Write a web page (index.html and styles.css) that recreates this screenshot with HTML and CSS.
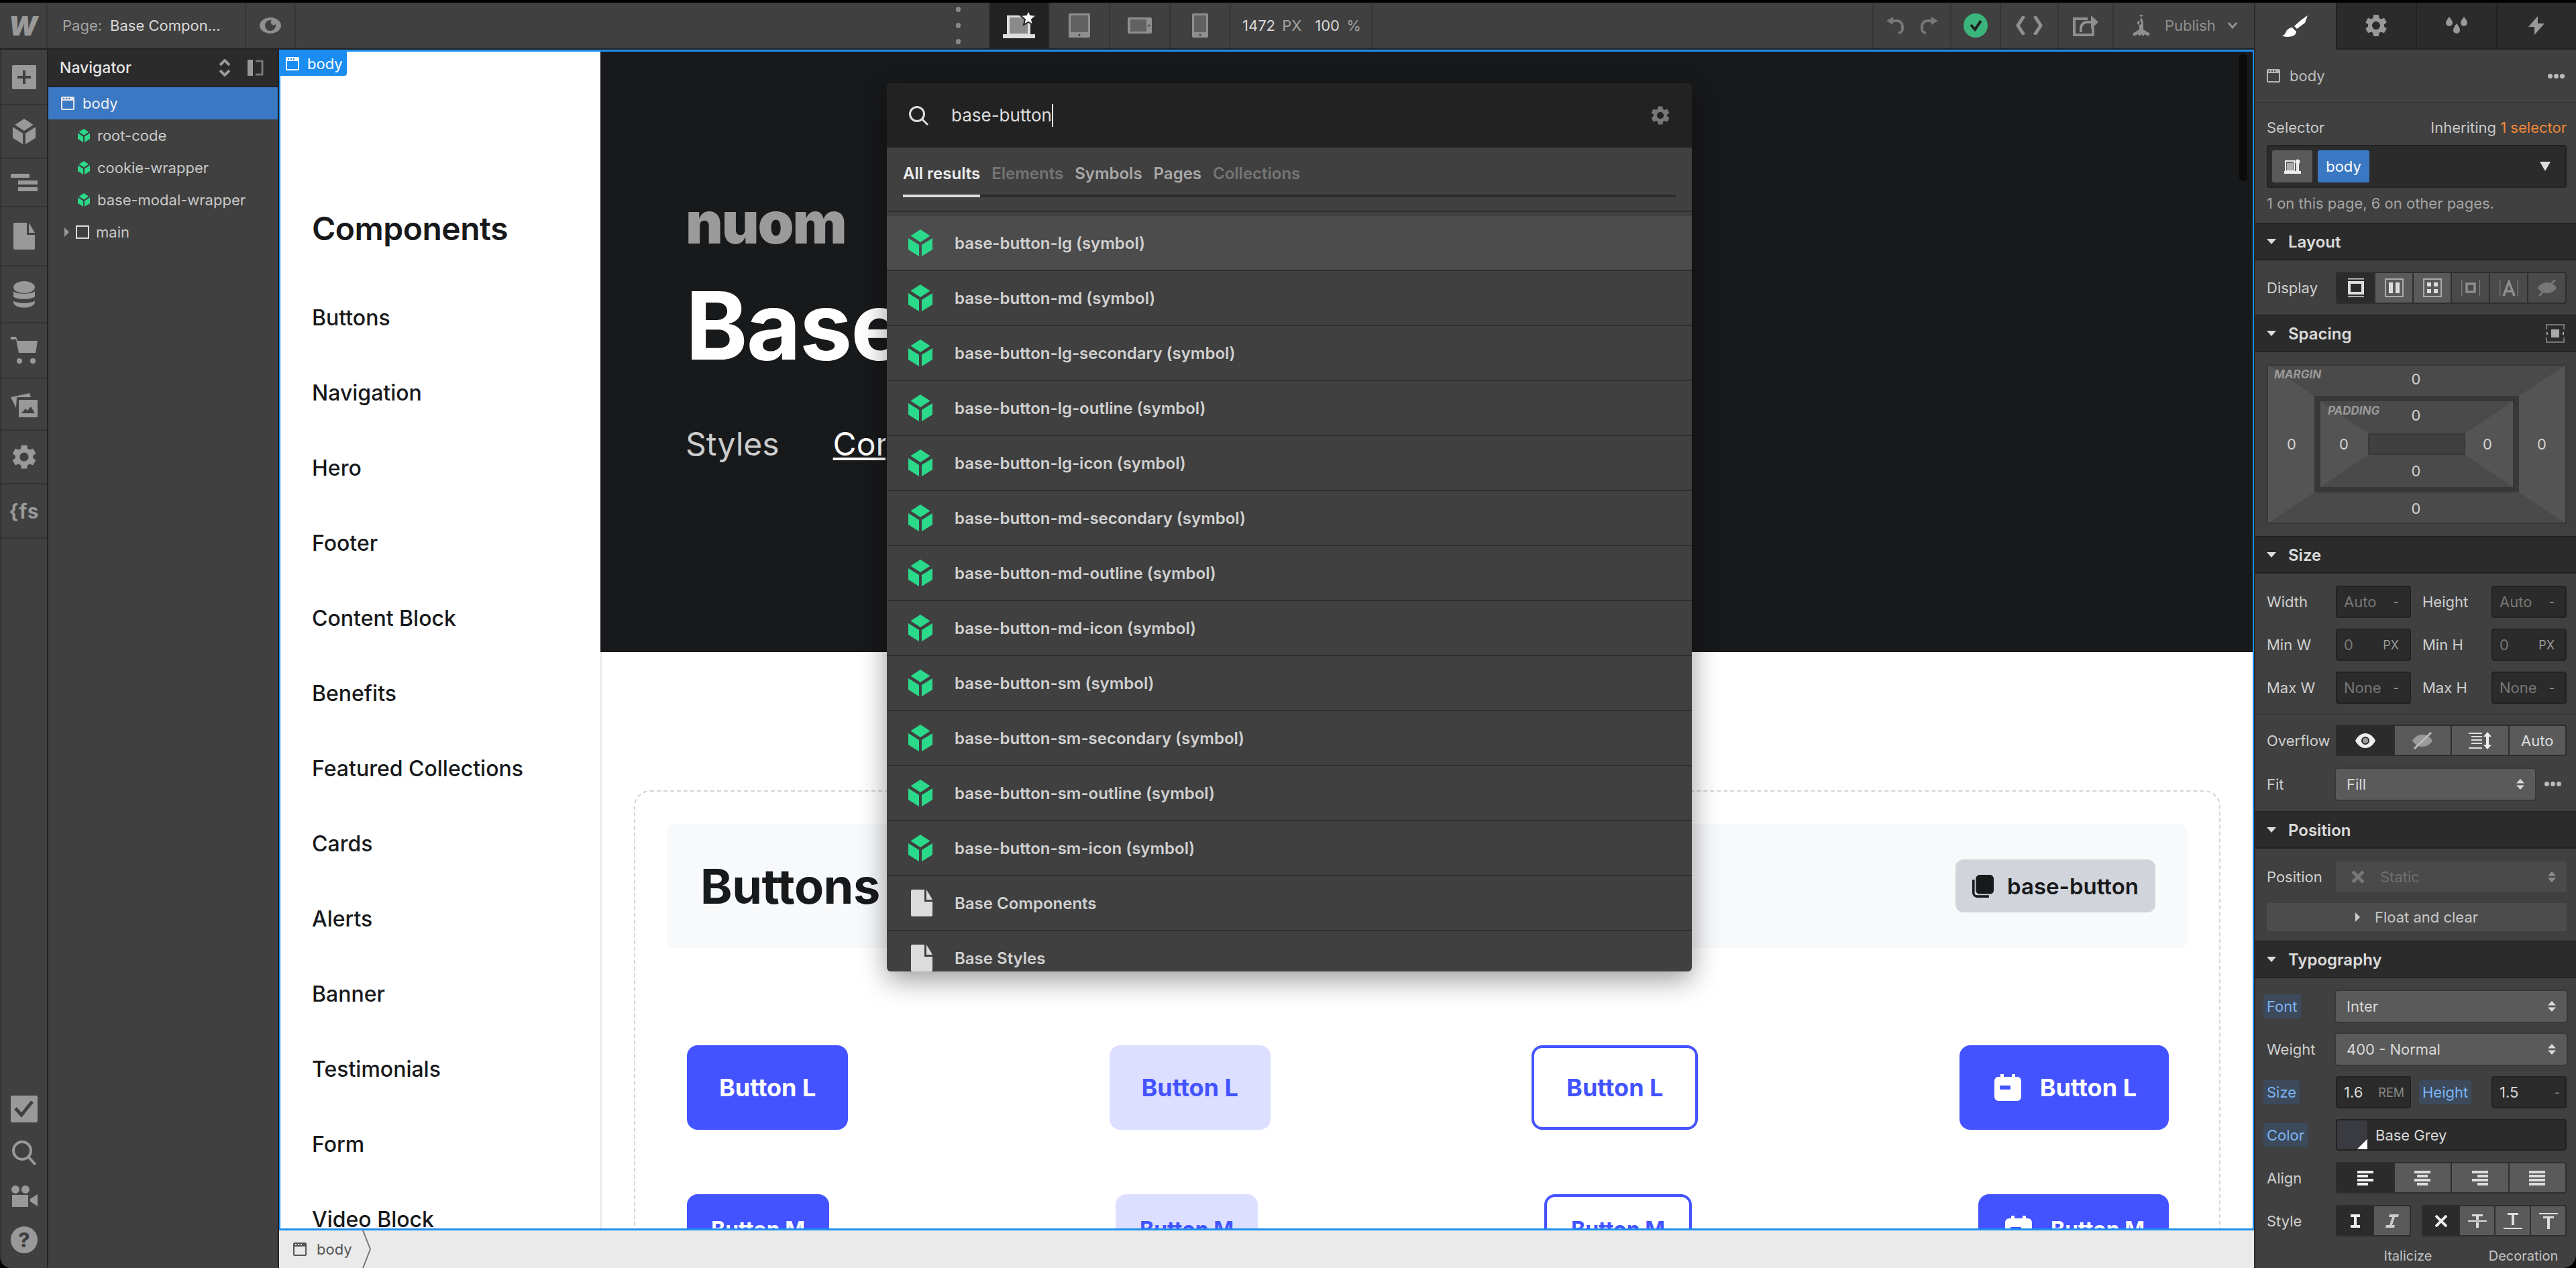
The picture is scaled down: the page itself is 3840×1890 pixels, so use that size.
FILE: index.html
```html
<!DOCTYPE html>
<html lang="en">
<head>
  <meta charset="UTF-8" />
  <title>Base Components - Designer</title>
  <link rel="stylesheet" href="styles.css">
</head>
<body>
  <svg class="defs" xmlns="http://www.w3.org/2000/svg">
    <symbol id="cube" viewBox="0 0 36 40">
      <path d="M18 0l14.500 9.500L18 19 3.500 9.500z"/>
      <path d="M0 13l16 10v17L0 30zM36 13L20 23v17l16-10z"/>
    </symbol>
    <symbol id="page" viewBox="0 0 32 40">
      <path d="M2 0h18v18h12v20a2 2 0 0 1-2 2H2a2 2 0 0 1-2-2V2a2 2 0 0 1 2-2z"/>
      <path d="M23 0l9 15h-9z"/>
    </symbol>
    <symbol id="gear" viewBox="0 0 24 24">
      <path fill-rule="evenodd" d="M19.140 12.940c.04-.3.06-.61.06-.94 0-.32-.02-.64-.07-.94l2.030-1.580c.18-.14.23-.41.12-.61l-1.920-3.320c-.12-.22-.37-.29-.59-.22l-2.390.96c-.5-.38-1.030-.7-1.620-.94l-.36-2.540c-.04-.24-.24-.41-.48-.41h-3.840c-.24 0-.43.17-.47.41l-.36 2.540c-.59.24-1.130.57-1.620.94l-2.390-.96c-.22-.08-.47 0-.59.22L2.740 8.870c-.12.21-.08.47.12.61l2.030 1.580c-.05.3-.09.63-.09.94s.02.64.07.94l-2.030 1.580c-.18.14-.23.41-.12.61l1.920 3.320c.12.22.37.29.59.22l2.390-.96c.5.38 1.030.7 1.620.94l.36 2.540c.05.24.24.41.48.41h3.840c.24 0 .44-.17.47-.41l.36-2.540c.59-.24 1.130-.56 1.620-.94l2.390.96c.22.08.47 0 .59-.22l1.920-3.320c.12-.22.07-.47-.12-.61l-2.010-1.580zM12 15.600c-1.980 0-3.600-1.620-3.600-3.600s1.620-3.600 3.600-3.600 3.600 1.620 3.600 3.600-1.620 3.600-3.600 3.600z"/>
    </symbol>
    <symbol id="bodybox" viewBox="0 0 20 20">
      <path fill-rule="evenodd" d="M2 0h16a2 2 0 0 1 2 2v16a2 2 0 0 1-2 2H2a2 2 0 0 1-2-2V2a2 2 0 0 1 2-2zm0 6v12h16V6zM3 2v2h2V2zm4 0v2h2V2zm4 0v2h2V2z"/>
    </symbol>
    <symbol id="updown" viewBox="0 0 12 16">
      <path d="M6 0l6 6.500H0zM6 16l6-6.500H0z"/>
    </symbol>
    <symbol id="calendar" viewBox="0 0 40 40">
      <path fill-rule="evenodd" d="M9 0h5v4h12V0h5v4h3a6 6 0 0 1 6 6v24a6 6 0 0 1-6 6H6a6 6 0 0 1-6-6V10a6 6 0 0 1 6-6h3zM8 17v6h16v-6z"/>
    </symbol>
  </svg>

  <div class="app">
    <div class="left">
      <header class="topbar">
        <div class="tb-logo">W</div>
        <div class="tb-page"><span class="muted">Page:</span> Base Compon...</div>
        <div class="tb-eye">
          <svg width="32" height="24" viewBox="0 0 32 24"><path fill="#8f8f8f" fill-rule="evenodd" d="M16 0c8 0 16 5 16 12s-8 12-16 12S0 19 0 12 8 0 16 0zm0 4a8 8 0 1 0 8 8c0-.7 0-1.400-.3-2a4 4 0 0 1-5.700-5.700 8 8 0 0 0-2-.3z"/></svg>
        </div>
        <div class="tb-dots"><i></i><i></i><i></i></div>
        <div class="tb-device active">
          <svg class="device-laptop" width="52" height="42" viewBox="0 0 52 42">
            <path fill="#ddd" d="M6 8h35v30H6zM0 36h48v6H0z"/>
            <path fill="#8a8a8a" d="M10 11h27v24H10z"/>
            <path fill="#fff" stroke="#222" stroke-width="2" d="M38 0l3 7 9 1-7 6 2 8-7-4-7 4 2-8-7-6 9-1z"/>
          </svg>
        </div>
        <div class="tb-device">
          <svg width="32" height="36" viewBox="0 0 32 36"><path fill="#8f8f8f" d="M2 0h28a2 2 0 0 1 2 2v32a2 2 0 0 1-2 2H2a2 2 0 0 1-2-2V2a2 2 0 0 1 2-2z"/><path fill="#616161" d="M3 3h26v25H3z"/><circle cx="16" cy="32" r="1.500" fill="#404040"/></svg>
        </div>
        <div class="tb-device">
          <svg width="36" height="24" viewBox="0 0 36 24"><path fill="#8f8f8f" d="M2 0h32a2 2 0 0 1 2 2v20a2 2 0 0 1-2 2H2a2 2 0 0 1-2-2V2a2 2 0 0 1 2-2z"/><path fill="#616161" d="M4 3h24v18H4z"/><circle cx="32" cy="12" r="1.500" fill="#404040"/></svg>
        </div>
        <div class="tb-device">
          <svg width="24" height="36" viewBox="0 0 24 36"><path fill="#8f8f8f" d="M2 0h20a2 2 0 0 1 2 2v32a2 2 0 0 1-2 2H2a2 2 0 0 1-2-2V2a2 2 0 0 1 2-2z"/><path fill="#616161" d="M3 3h18v25H3z"/><circle cx="12" cy="32" r="1.500" fill="#404040"/></svg>
        </div>
        <div class="tb-size"><span>1472 <span class="muted">PX</span></span><span>100 <span class="muted">%</span></span></div>
        <div class="tb-spacer"></div>
        <div class="tb-undo">
          <svg width="28" height="26" viewBox="0 0 28 26"><path fill="none" stroke="#777" stroke-width="4" d="M8 6h8a8 8 0 0 1 8 8v4a6 6 0 0 1-6 6"/><path fill="#777" d="M0 6l10-6v12z"/></svg>
          <svg width="28" height="26" viewBox="0 0 28 26"><path fill="none" stroke="#777" stroke-width="4" d="M20 6h-8a8 8 0 0 0-8 8v4a6 6 0 0 0 6 6"/><path fill="#777" d="M28 6L18 0v12z"/></svg>
        </div>
        <div class="tb-check">
          <svg width="36" height="36" viewBox="0 0 36 36"><circle cx="18" cy="18" r="18" fill="#3ab57c"/><path fill="none" stroke="#222" stroke-width="4" d="M11 17l6 7 9-13"/></svg>
        </div>
        <div class="tb-code">
          <svg width="40" height="28" viewBox="0 0 40 28"><path fill="none" stroke="#8f8f8f" stroke-width="5" d="M12 0L3 14l9 14M28 0l9 14-9 14"/></svg>
        </div>
        <div class="tb-export">
          <svg width="38" height="32" viewBox="0 0 38 32"><path fill="none" stroke="#8f8f8f" stroke-width="4" d="M22 6H2v24h28V18"/><path fill="none" stroke="#8f8f8f" stroke-width="4" d="M12 26v-6a9 9 0 0 1 9-9h6"/><path fill="#8f8f8f" d="M27 1l11 10-11 10z"/></svg>
        </div>
        <div class="tb-publish">
          <svg width="32" height="32" viewBox="0 0 32 32"><path fill="#8f8f8f" fill-rule="evenodd" d="M16 0c4 4 6 9 6 14v8l10 6-2 4-6-3-2 3-3-3-3 3-2-3-6 3-2-4 10-6v-8c0-5 2-10 6-14zm0 9a3 3 0 1 0 0 6 3 3 0 0 0 0-6z"/></svg>
          <span>Publish</span>
          <svg width="14" height="10" viewBox="0 0 14 10"><path fill="none" stroke="#8f8f8f" stroke-width="3" d="M1 1l6 7 6-7"/></svg>
        </div>
      </header>

      <div class="work">
        <nav class="rail">
          <div class="rail-top">
            <div class="rail-cell h83"><svg width="36" height="36" viewBox="0 0 36 36"><rect width="36" height="36" rx="2" fill="#999"/><path fill="#404040" d="M16 8h4v8h8v4h-8v8h-4v-8H8v-4h8z"/></svg></div>
            <div class="rail-cell h80"><svg class="gray" width="36" height="38"><use href="#cube"/></svg></div>
            <div class="rail-cell h72"><svg width="40" height="26" viewBox="0 0 40 26"><path fill="#999" d="M0 0h28v6H0zM11 10h29v6H11zM11 20h29v6H11z"/></svg></div>
            <div class="rail-cell h88"><svg class="gray" width="32" height="40"><use href="#page"/></svg></div>
            <div class="rail-cell h85"><svg width="32" height="40" viewBox="0 0 32 40"><ellipse cx="16" cy="9" rx="16" ry="9" fill="#999"/><path fill="#999" d="M0 15c4 5 28 5 32 0v8c-4 5-28 5-32 0zM0 29c4 5 28 5 32 0v3c-2 10-30 10-32 0z"/></svg></div>
            <div class="rail-cell h83"><svg width="40" height="42" viewBox="0 0 40 42"><path fill="#999" d="M0 0h8l2 6h30l-3 18H12L8 4H0z"/><circle cx="13" cy="36" r="4" fill="#999"/><circle cx="33" cy="36" r="4" fill="#999"/></svg></div>
            <div class="rail-cell h77"><svg width="40" height="38" viewBox="0 0 40 38"><path fill="#999" d="M0 8l28-6 2 6H9l-1 16z"/><path fill="#999" fill-rule="evenodd" d="M12 12h28v26H12zm4 20h20l-6-10-5 6-3-3z"/></svg></div>
            <div class="rail-cell h80"><svg class="gray" width="44" height="44"><use href="#gear"/></svg></div>
            <div class="rail-cell h81 rail-fs">{fs</div>
          </div>
          <div class="rail-bottom">
            <div class="rail-cell h65"><svg width="40" height="40" viewBox="0 0 40 40"><rect width="40" height="40" rx="2" fill="#999"/><path fill="none" stroke="#404040" stroke-width="5" d="M7 19l9 10L32 9"/></svg></div>
            <div class="rail-cell h65"><svg width="36" height="36" viewBox="0 0 36 36"><circle cx="15" cy="15" r="13" fill="none" stroke="#999" stroke-width="4"/><path stroke="#999" stroke-width="4" d="M24 24l11 12"/></svg></div>
            <div class="rail-cell h65"><svg width="40" height="32" viewBox="0 0 40 32"><circle cx="7" cy="6" r="6" fill="#999"/><circle cx="22" cy="6" r="6" fill="#999"/><path fill="#999" d="M2 14h24v18H2zM29 20l11-7v18l-11-7z"/></svg></div>
            <div class="rail-cell h65"><span class="rail-help">?</span></div>
          </div>
        </nav>

        <aside class="navigator">
          <div class="nav-head">
            <span>Navigator</span>
            <svg class="nav-sort" width="18" height="26" viewBox="0 0 18 26"><path fill="none" stroke="#999" stroke-width="4" d="M2 9l7-7 7 7M2 17l7 7 7-7"/></svg>
            <svg width="24" height="24" viewBox="0 0 24 24"><path fill="#999" d="M0 0h8v24H0z"/><path fill="none" stroke="#777" stroke-width="3" d="M12 2h10v20H12"/></svg>
          </div>
          <div class="nav-row selected"><svg class="box-icon" width="20" height="20"><use href="#bodybox"/></svg>body</div>
          <div class="nav-row"><svg class="green" width="20" height="20"><use href="#cube"/></svg>root-code</div>
          <div class="nav-row"><svg class="green" width="20" height="20"><use href="#cube"/></svg>cookie-wrapper</div>
          <div class="nav-row"><svg class="green" width="20" height="20"><use href="#cube"/></svg>base-modal-wrapper</div>
          <div class="nav-row nav-main">
            <span class="nav-arrow"></span>
            <span class="nav-square"></span>main
          </div>
        </aside>

        <div class="stage">
          <main class="canvas">
            <div class="page">
              <section class="side">
                <h2>Components</h2>
                <ul>
                  <li>Buttons</li>
                  <li>Navigation</li>
                  <li>Hero</li>
                  <li>Footer</li>
                  <li>Content Block</li>
                  <li>Benefits</li>
                  <li>Featured Collections</li>
                  <li>Cards</li>
                  <li>Alerts</li>
                  <li>Banner</li>
                  <li>Testimonials</li>
                  <li>Form</li>
                  <li>Video Block</li>
                </ul>
              </section>
              <section class="content">
                <div class="hero">
                  <div class="logo">nuom</div>
                  <h1>Base</h1>
                  <div class="hero-links"><span>Styles</span><span class="current">Components</span></div>
                </div>
                <div class="dash">
                  <div class="band">
                    <h3>Buttons</h3>
                    <div class="pill">
                      <svg width="32" height="36" viewBox="0 0 36 38"><path fill="#18191b" d="M12 0h18a6 6 0 0 1 6 6v20a6 6 0 0 1-6 6H12a6 6 0 0 1-6-6V6a6 6 0 0 1 6-6z"/><path fill="none" stroke="#18191b" stroke-width="4" d="M2 8v22a6 6 0 0 0 6 6h20"/></svg>
                      base-button
                    </div>
                  </div>
                  <div class="btn-row lg">
                    <span class="btn">Button L</span>
                    <span class="btn soft">Button L</span>
                    <span class="btn outline">Button L</span>
                    <span class="btn"><svg class="white" width="40" height="40"><use href="#calendar"/></svg>Button L</span>
                  </div>
                  <div class="btn-row md">
                    <span class="btn">Button M</span>
                    <span class="btn soft">Button M</span>
                    <span class="btn outline">Button M</span>
                    <span class="btn"><svg class="white" width="40" height="40"><use href="#calendar"/></svg>Button M</span>
                  </div>
                </div>
              </section>
            </div>
            <div class="scroll-thumb"></div>
            <div class="body-tag"><svg class="white" width="20" height="20"><use href="#bodybox"/></svg>body</div>

            <div class="finder">
              <div class="finder-search">
                <svg width="30" height="30" viewBox="0 0 30 30"><circle cx="13" cy="13" r="10.500" fill="none" stroke="#ddd" stroke-width="3"/><path stroke="#ddd" stroke-width="3" d="M21 21l8 8"/></svg>
                <span class="finder-input">base-button</span>
                <svg class="finder-gear" width="34" height="34"><use href="#gear"/></svg>
              </div>
              <div class="finder-tabs">
                <span class="on">All results</span>
                <span class="dim">Elements</span>
                <span>Symbols</span>
                <span>Pages</span>
                <span class="dim">Collections</span>
              </div>
              <div class="finder-list">
                <div class="hit hover"><svg class="green" width="36" height="40"><use href="#cube"/></svg>base-button-lg (symbol)</div>
                <div class="hit"><svg class="green" width="36" height="40"><use href="#cube"/></svg>base-button-md (symbol)</div>
                <div class="hit"><svg class="green" width="36" height="40"><use href="#cube"/></svg>base-button-lg-secondary (symbol)</div>
                <div class="hit"><svg class="green" width="36" height="40"><use href="#cube"/></svg>base-button-lg-outline (symbol)</div>
                <div class="hit"><svg class="green" width="36" height="40"><use href="#cube"/></svg>base-button-lg-icon (symbol)</div>
                <div class="hit"><svg class="green" width="36" height="40"><use href="#cube"/></svg>base-button-md-secondary (symbol)</div>
                <div class="hit"><svg class="green" width="36" height="40"><use href="#cube"/></svg>base-button-md-outline (symbol)</div>
                <div class="hit"><svg class="green" width="36" height="40"><use href="#cube"/></svg>base-button-md-icon (symbol)</div>
                <div class="hit"><svg class="green" width="36" height="40"><use href="#cube"/></svg>base-button-sm (symbol)</div>
                <div class="hit"><svg class="green" width="36" height="40"><use href="#cube"/></svg>base-button-sm-secondary (symbol)</div>
                <div class="hit"><svg class="green" width="36" height="40"><use href="#cube"/></svg>base-button-sm-outline (symbol)</div>
                <div class="hit"><svg class="green" width="36" height="40"><use href="#cube"/></svg>base-button-sm-icon (symbol)</div>
                <div class="hit"><svg class="pale" width="32" height="40"><use href="#page"/></svg>Base Components</div>
                <div class="hit"><svg class="pale" width="32" height="40"><use href="#page"/></svg>Base Styles</div>
              </div>
            </div>
          </main>
          <div class="crumbs">
            <svg class="dark" width="20" height="20"><use href="#bodybox"/></svg>
            <span>body</span>
            <svg class="crumb-sep" width="14" height="56" viewBox="0 0 14 56"><path fill="none" stroke="#777" stroke-width="2" d="M1 0l11 28L1 56"/></svg>
          </div>
        </div>
      </div>
    </div>

    <aside class="panel">
      <div class="tabs">
        <div class="tab active"><svg width="40" height="32" viewBox="0 0 40 32"><path fill="#fff" d="M38 0l-4 11-12 9-4-4 10-9z"/><path fill="#fff" d="M15 18l6 6c0 5-5 8-14 8-3 0-5-1-7-2 5-1 5-5 7-8 2-2 5-4 8-4z"/></svg></div>
        <div class="tab"><svg class="gray" width="40" height="40"><use href="#gear"/></svg></div>
        <div class="tab"><svg width="36" height="26" viewBox="0 0 36 26"><path fill="#999" d="M7 0c3 4 5 6 5 9a5 5 0 0 1-10 0c0-3 2-5 5-9zM29 0c3 4 5 6 5 9a5 5 0 0 1-10 0c0-3 2-5 5-9zM18 10c3 4 5 7 5 10a5 5 0 0 1-10 0c0-3 2-6 5-10z"/></svg></div>
        <div class="tab"><svg width="24" height="28" viewBox="0 0 24 28"><path fill="#999" d="M14 0v11h10L9 28V16H0z"/></svg></div>
      </div>

      <div class="el-row">
        <svg class="el-icon" width="20" height="20"><use href="#bodybox"/></svg>
        <span>body</span>
        <span class="el-dots"><i></i><i></i><i></i></span>
      </div>

      <div class="selector">
        <div class="sel-top"><span>Selector</span><span>Inheriting <em>1 selector</em></span></div>
        <div class="sel-input">
          <span class="sel-btn"><svg width="25" height="22" viewBox="0 0 25 22"><path fill="none" stroke="#eee" stroke-width="2" d="M2 3h13v15H2z"/><path fill="#aaa" d="M4 6h9v11H4z"/><circle cx="20" cy="4" r="3.500" fill="#eee"/><path fill="#eee" d="M0 18h25v4H0zM18 7h4v11h-4z"/></svg></span>
          <span class="sel-tag">body</span>
          <span class="sel-caret"></span>
        </div>
        <div class="sel-note">1 on this page, 6 on other pages.</div>
      </div>

      <h4 class="head"><i></i>Layout</h4>
      <div class="display">
        <span class="lab">Display</span>
        <div class="seg flex1">
          <span class="dark-seg"><svg width="24" height="28" viewBox="0 0 24 28"><path fill="#ddd" d="M0 0h24v1.500H0zM0 26.500h24V28H0z"/><path fill="none" stroke="#ddd" stroke-width="4" d="M2 6h20v16H2z"/></svg></span>
          <span class="lit"><svg width="28" height="28" viewBox="0 0 28 28"><path fill="none" stroke="#aaa" stroke-width="2" d="M1 1h26v26H1z"/><path fill="#ddd" d="M6 6h6v16H6zM16 6h6v16h-6z"/></svg></span>
          <span class="lit"><svg width="28" height="28" viewBox="0 0 28 28"><path fill="none" stroke="#aaa" stroke-width="2" d="M1 1h26v26H1z"/><path fill="#ddd" d="M6 6h6v6H6zM16 6h6v6h-6zM6 16h6v6H6zM16 16h6v6h-6z"/></svg></span>
          <span><svg width="28" height="24" viewBox="0 0 28 24"><path fill="#777" d="M0 0h1.500v24H0zM26.500 0H28v24h-1.500z"/><path fill="none" stroke="#8f8f8f" stroke-width="3.500" d="M8 6h12v12H8z"/></svg></span>
          <span><svg width="28" height="24" viewBox="0 0 28 24"><path fill="#777" d="M0 0h1.500v24H0zM26.500 0H28v24h-1.500z"/><path fill="none" stroke="#8f8f8f" stroke-width="3.500" d="M6 24L14 3l8 21M9 17h10"/></svg></span>
          <span><svg width="28" height="24" viewBox="0 0 28 24"><path fill="#777" d="M14 4c7 0 12 4 14 8-2 4-7 8-14 8S2 16 0 12c2-4 7-8 14-8z"/><path stroke="#777" stroke-width="3" d="M26 0L2 24"/></svg></span>
        </div>
      </div>

      <h4 class="head"><i></i>Spacing<svg class="head-icon" width="28" height="28" viewBox="0 0 28 28"><path fill="none" stroke="#777" stroke-width="2" d="M1 8V1h26v7M1 20v7h26v-7"/><path fill="#aaa" d="M8 8h12v12H8zM1 11l3 3-3 3zM27 11l-3 3 3 3z"/></svg></h4>
      <div class="spacing">
        <div class="sp-margin">
          <div class="sp-frame">
            <div class="sp-padding">
              <div class="sp-core"></div>
            </div>
            <b class="sp-name sp-name-p">PADDING</b>
            <span class="sp-val p-top">0</span>
            <span class="sp-val p-left">0</span>
            <span class="sp-val p-right">0</span>
            <span class="sp-val p-bottom">0</span>
          </div>
          <b class="sp-name sp-name-m">MARGIN</b>
          <span class="sp-val m-top">0</span>
          <span class="sp-val m-left">0</span>
          <span class="sp-val m-right">0</span>
          <span class="sp-val m-bottom">0</span>
        </div>
      </div>

      <h4 class="head"><i></i>Size</h4>
      <div class="size">
        <div class="size-grid">
          <span class="lab">Width</span><span class="field faint">Auto<u>-</u></span><span class="lab">Height</span><span class="field faint">Auto<u>-</u></span>
          <span class="lab">Min W</span><span class="field faint">0<u>PX</u></span><span class="lab">Min H</span><span class="field faint">0<u>PX</u></span>
          <span class="lab">Max W</span><span class="field faint">None<u>-</u></span><span class="lab">Max H</span><span class="field faint">None<u>-</u></span>
        </div>
        <div class="size-more">
          <div class="line">
            <span class="lab">Overflow</span>
            <div class="seg seg4">
              <span class="dark-seg"><svg width="30" height="22" viewBox="0 0 30 22"><path fill="#eee" fill-rule="evenodd" d="M15 0c7 0 12 5 15 11-3 6-8 11-15 11S3 17 0 11C3 5 8 0 15 0zm0 5a6 6 0 1 0 0 12 6 6 0 0 0 0-12z"/><circle cx="15" cy="11" r="4" fill="#999"/></svg></span>
              <span class="lit"><svg width="30" height="26" viewBox="0 0 30 26"><path fill="#999" d="M15 4c7 0 12 4 15 9-3 5-8 9-15 9S3 18 0 13c3-5 8-9 15-9z"/><path stroke="#bbb" stroke-width="3" d="M28 1L3 25"/></svg></span>
              <span class="lit"><svg width="34" height="26" viewBox="0 0 34 26"><path fill="#ddd" d="M0 1h20v2H0zM4 6h16v2H4zM4 11h16v2H4zM4 16h16v2H4zM0 23h20v2H0z"/><path fill="#eee" d="M28 0l6 7h-4v12h4l-6 7-6-7h4V7h-4z"/></svg></span>
              <span class="lit plain">Auto</span>
            </div>
          </div>
          <div class="line">
            <span class="lab">Fit</span>
            <span class="select narrow">Fill<svg width="12" height="16"><use href="#updown"/></svg></span>
            <span class="row-dots"><i></i><i></i><i></i></span>
          </div>
        </div>
      </div>

      <h4 class="head"><i></i>Position</h4>
      <div class="position">
        <div class="line">
          <span class="lab">Position</span>
          <span class="select off"><svg class="x-mark" width="18" height="18" viewBox="0 0 18 18"><path stroke="#777" stroke-width="5" d="M1 1l16 16M17 1L1 17"/></svg><span class="off-text">Static</span><svg width="12" height="16"><use href="#updown"/></svg></span>
        </div>
        <div class="float-btn"><i></i>Float and clear</div>
      </div>

      <h4 class="head"><i></i>Typography</h4>
      <div class="typo">
        <div class="line">
          <span class="lab"><span class="set">Font</span></span>
          <span class="select">Inter<svg width="12" height="16"><use href="#updown"/></svg></span>
        </div>
        <div class="line">
          <span class="lab">Weight</span>
          <span class="select">400 - Normal<svg width="12" height="16"><use href="#updown"/></svg></span>
        </div>
        <div class="size-pair">
          <span class="lab"><span class="set">Size</span></span>
          <span class="field">1.6<u>REM</u></span>
          <span class="lab"><span class="set">Height</span></span>
          <span class="field">1.5<u>-</u></span>
        </div>
        <div class="line">
          <span class="lab"><span class="set">Color</span></span>
          <span class="color-field"><span class="swatch"></span>Base Grey</span>
        </div>
        <div class="line">
          <span class="lab">Align</span>
          <div class="seg seg4">
            <span class="dark-seg"><svg width="24" height="22" viewBox="0 0 24 22"><path fill="#eee" d="M0 0h24v4H0zM0 6h16v4H0zM0 12h24v4H0zM0 18h16v4H0z"/></svg></span>
            <span class="lit"><svg width="24" height="22" viewBox="0 0 24 22"><path fill="#ddd" d="M0 0h24v4H0zM4 6h16v4H4zM0 12h24v4H0zM4 18h16v4H4z"/></svg></span>
            <span class="lit"><svg width="24" height="22" viewBox="0 0 24 22"><path fill="#ddd" d="M0 0h24v4H0zM8 6h16v4H8zM0 12h24v4H0zM8 18h16v4H8z"/></svg></span>
            <span class="lit"><svg width="24" height="22" viewBox="0 0 24 22"><path fill="#ddd" d="M0 0h24v4H0zM0 6h24v4H0zM0 12h24v4H0zM0 18h24v4H0z"/></svg></span>
          </div>
        </div>
        <div class="line style-line">
          <span class="lab">Style</span>
          <div class="seg seg2">
            <span class="dark-seg"><svg width="14" height="20" viewBox="0 0 14 20"><path fill="#eee" d="M0 0h14v4h-5v12h5v4H0v-4h5V4H0z"/></svg></span>
            <span class="lit"><svg width="20" height="20" viewBox="0 0 20 20"><path fill="#ccc" d="M6 0h14l-1 4h-5l-4 12h4l-1 4H0l1-4h5l4-12H5z"/></svg></span>
          </div>
          <div class="seg seg-deco">
            <span class="dark-seg"><svg width="18" height="18" viewBox="0 0 18 18"><path stroke="#eee" stroke-width="4" d="M1 1l16 16M17 1L1 17"/></svg></span>
            <span class="lit"><svg width="28" height="20" viewBox="0 0 28 20"><path fill="#ddd" d="M6 0h16v3h-6v5h-4V3H6zM12 12h4v8h-4zM0 9h28v2H0z"/></svg></span>
            <span class="lit"><svg width="28" height="24" viewBox="0 0 28 24"><path fill="#ddd" d="M6 0h16v3h-6v15h-4V3H6zM0 22h28v2H0z"/></svg></span>
            <span class="lit"><svg width="28" height="24" viewBox="0 0 28 24"><path fill="#ddd" d="M0 0h28v2H0zM6 5h16v3h-6v16h-4V8H6z"/></svg></span>
          </div>
        </div>
        <div class="captions"><span>Italicize</span><span>Decoration</span></div>
      </div>
    </aside>
  </div>
</body>
</html>
```

FILE: styles.css
```css
* {
  margin: 0;
  padding: 0;
  box-sizing: border-box;
}
body {
  background: #000;
  font-family: Inter, "Noto Sans", sans-serif;
  font-size: 22px;
  color: #d9d9d9;
  height: 100vh;
  overflow: hidden;
}
.defs {
  position: absolute;
  width: 0;
  height: 0;
}
svg {
  display: block;
  flex: none;
  fill: currentColor;
}
i, em, u {
  font-style: normal;
  text-decoration: none;
}
.gray { color: #999; }
.green { color: #2bd98b; }
.pale { color: #dcdcdc; }
.white { color: #fff; }
.dark { color: #555; }
.muted { color: #a3a3a3; }

.app {
  display: flex;
  height: 100%;
}
.left {
  width: 3360px;
  display: flex;
  flex-direction: column;
}

/* top bar */
.topbar {
  height: 72px;
  border-top: 4px solid #000;
  background: #404040;
  display: flex;
  align-items: stretch;
  flex: none;
}
.topbar > div {
  display: flex;
  align-items: center;
  justify-content: center;
  border-right: 2px solid #363636;
}
.tb-logo {
  width: 71px;
  font-weight: 900;
  font-style: italic;
  font-size: 40px;
  color: #999;
}
.topbar > .tb-page {
  width: 296px;
  gap: 12px;
  justify-content: flex-start;
  padding-left: 22px;
  white-space: nowrap;
}
.tb-eye { width: 74px; }
.topbar > .tb-dots {
  width: 1034px;
  border-right: none;
  flex-direction: column;
  align-items: flex-end;
  justify-content: center;
  gap: 16px;
  padding-right: 43px;
}
.tb-dots i {
  width: 7px;
  height: 8px;
  border-radius: 50%;
  background: #8a8a8a;
}
.tb-device {
  width: 90px;
}
.tb-device.active {
  background: #222;
}
.device-laptop {
  margin: -4px 0 0 4px;
}
.topbar > .tb-size {
  width: 211px;
  white-space: nowrap;
  justify-content: flex-start;
  padding-left: 17px;
  gap: 20px;
  word-spacing: 4px;
}
.tb-spacer {
  flex: 1;
}
.tb-undo {
  width: 116px;
  gap: 21px;
}
.tb-check { width: 74px; }
.tb-code { width: 86px; }
.tb-export { width: 82px; }
.topbar > .tb-publish {
  width: 209px;
  gap: 22px;
  border-right: none;
  justify-content: flex-start;
  padding-left: 22px;
  color: #8f8f8f;
}
.tb-publish svg:last-child {
  margin-left: -4px;
}

/* left side */
.work {
  flex: 1;
  display: flex;
  min-height: 0;
  border-top: 2px solid #222;
}
.rail {
  width: 72px;
  background: #404040;
  border-left: 2px solid #333;
  border-right: 2px solid #222;
  border-bottom-left-radius: 16px;
  display: flex;
  flex-direction: column;
  justify-content: space-between;
  flex: none;
}
.rail-cell {
  display: flex;
  align-items: center;
  justify-content: center;
}
.rail-top .rail-cell {
  border-bottom: 2px solid #333;
}
.h83 { height: 83px; }
.h80 { height: 80px; }
.h72 { height: 72px; }
.h88 { height: 88px; }
.h85 { height: 85px; }
.h77 { height: 77px; }
.h81 { height: 81px; }
.h65 { height: 65px; }
.rail-bottom {
  padding-bottom: 10px;
}
.rail-fs {
  font-size: 30px;
  font-weight: 700;
  color: #999;
  letter-spacing: 1px;
}
.rail-help {
  width: 40px;
  height: 40px;
  border-radius: 50%;
  background: #999;
  color: #404040;
  font-size: 30px;
  font-weight: 800;
  display: flex;
  align-items: center;
  justify-content: center;
}

.navigator {
  width: 344px;
  background: #404040;
  border-right: 2px solid #222;
  flex: none;
}
.nav-head {
  height: 56px;
  background: #2b2b2b;
  border-bottom: 2px solid #222;
  display: flex;
  align-items: center;
  padding: 0 21px 0 17px;
  font-size: 23px;
  font-weight: 500;
  color: #e6e6e6;
}
.nav-sort {
  margin-left: auto;
  margin-right: 25px;
}
.nav-row {
  height: 48px;
  display: flex;
  align-items: center;
  gap: 10px;
  padding-left: 43px;
  color: #c9c9c9;
}
.nav-row.selected {
  background: #3b78c3;
  color: #eee;
  padding-left: 19px;
  gap: 12px;
}
.nav-main {
  padding-left: 24px;
}
.nav-arrow {
  border-left: 7px solid #999;
  border-top: 7px solid transparent;
  border-bottom: 7px solid transparent;
}
.nav-square {
  width: 20px;
  height: 20px;
  border: 2px solid #ddd;
}
.box-icon {
  color: #e4e4e4;
}

/* canvas */
.stage {
  flex: 1;
  display: flex;
  flex-direction: column;
  min-width: 0;
}
.canvas {
  flex: 1;
  position: relative;
  overflow: hidden;
  min-height: 0;
  background: #fff;
  border: 2px solid #1c8df0;
  border-top-width: 3px;
  border-bottom-width: 3px;
}
.page {
  display: grid;
  grid-template-columns: 477px 1fr;
  color: #18191b;
  height: 100%;
}
.side {
  padding: 240px 0 0 47px;
}
.side h2 {
  font-size: 48px;
  font-weight: 600;
  line-height: 48px;
  letter-spacing: -0.5px;
  margin-bottom: 85px;
}
.side ul {
  list-style: none;
  display: flex;
  flex-direction: column;
  gap: 64px;
}
.side li {
  font-size: 32px;
  font-weight: 500;
  line-height: 48px;
}
.content {
  min-width: 0;
  border-left: 2px solid #e8e8e8;
}
.hero {
  height: 895px;
  background: #18191b;
  color: #fff;
  padding: 220px 0 0 127px;
  white-space: nowrap;
  margin-left: -2px;
}
.logo {
  font-size: 86px;
  font-weight: 900;
  line-height: 70px;
  color: #9a9a9a;
  letter-spacing: -2px;
}
.hero h1 {
  font-size: 140px;
  font-weight: 700;
  line-height: 170px;
  margin-top: 33px;
  letter-spacing: -2px;
}
.hero-links {
  display: flex;
  gap: 80px;
  width: 298px;
  overflow: hidden;
  font-size: 48px;
  line-height: 72px;
  margin-top: 56px;
  color: #ccc;
}
.hero-links .current {
  color: #fff;
  text-decoration: underline;
}
.dash {
  margin: 206px 48px 0 48px;
  padding: 48px 47px;
  border: 2px dashed #d1d5db;
  border-bottom: none;
  border-radius: 24px 24px 0 0;
}
.band {
  height: 185px;
  background: #f8f9fb;
  border-radius: 12px;
  display: flex;
  align-items: center;
  justify-content: space-between;
  padding: 0 48px 0 50px;
}
.band h3 {
  font-size: 72px;
  font-weight: 700;
  letter-spacing: -0.5px;
}
.pill {
  width: 298px;
  height: 79px;
  background: #d1d5db;
  border-radius: 12px;
  display: flex;
  align-items: center;
  justify-content: center;
  gap: 20px;
  font-size: 33px;
  font-weight: 600;
  white-space: nowrap;
}
.btn-row {
  display: flex;
  justify-content: space-between;
  align-items: flex-start;
  padding: 0 28px 0 30px;
}
.btn-row.lg {
  margin-top: 145px;
}
.btn-row.md {
  margin-top: 96px;
}
.btn {
  display: inline-flex;
  align-items: center;
  gap: 28px;
  background: #4353ff;
  color: #fff;
  font-weight: 700;
  border-radius: 16px;
  white-space: nowrap;
}
.btn svg {
  margin-left: 4px;
}
.lg .btn {
  height: 126px;
  padding: 0 48px;
  font-size: 36px;
}
.md .btn {
  height: 104px;
  padding: 0 36px;
  font-size: 32px;
}
.btn.soft {
  background: #dcdfff;
  color: #4353ff;
}
.btn.outline {
  background: #fff;
  color: #4353ff;
  border: 4px solid #4353ff;
}
.scroll-thumb {
  position: absolute;
  top: 3px;
  right: 8px;
  width: 12px;
  height: 190px;
  border-radius: 6px;
  background: #0b0b0c;
}
.body-tag {
  position: absolute;
  top: 0;
  left: 0;
  height: 36px;
  padding: 0 8px 0 8px;
  width: 99px;
  background: #1c8df0;
  color: #fff;
  border-bottom-right-radius: 4px;
  display: flex;
  align-items: center;
  gap: 12px;
}
.crumbs {
  height: 56px;
  flex: none;
  background: #eaeaea;
  display: flex;
  align-items: center;
  padding-left: 21px;
  color: #555;
}
.crumbs span {
  margin-left: 15px;
}
.crumb-sep {
  margin-left: 15px;
}

/* finder */
.finder {
  position: absolute;
  left: 904px;
  top: 47px;
  width: 1200px;
  height: 1324px;
  background: #404040;
  border-radius: 6px;
  overflow: hidden;
  box-shadow: 0 12px 40px rgba(0, 0, 0, 0.4);
}
.finder-search {
  height: 96px;
  background: #222;
  display: flex;
  align-items: center;
  padding: 0 30px 0 32px;
}
.finder-input {
  font-size: 26px;
  color: #ddd;
  margin-left: 34px;
  border-right: 2px solid #eee;
  line-height: 34px;
}
.finder-gear {
  margin-left: auto;
  color: #777;
}
.finder-tabs {
  height: 96px;
  padding: 19px 24px 0;
  display: flex;
  gap: 17px;
  font-size: 24px;
  font-weight: 600;
  color: #a8a8a8;
  border-bottom: 2px solid #2e2e2e;
  background: linear-gradient(#2b2b2b, #2b2b2b) 24px 70px / calc(100% - 48px) 4px no-repeat;
}
.finder-tabs span {
  height: 55px;
  line-height: 40px;
  border-bottom: 4px solid transparent;
}
.finder-tabs .on {
  color: #eee;
  border-bottom-color: #ddd;
}
.finder-tabs .dim {
  color: #757575;
}
.finder-list {
  padding-top: 6px;
}
.hit {
  height: 82px;
  display: flex;
  align-items: center;
  gap: 33px;
  padding-left: 32px;
  border-bottom: 2px solid #2e2e2e;
  font-weight: 600;
  font-size: 24px;
  color: #d0d0d0;
}
.hit.hover {
  background: #4c4c4c;
}
.hit .pale {
  margin-left: 4px;
}

/* right panel */
.panel {
  width: 480px;
  height: calc(100% - 4px);
  margin-top: 4px;
  background: #404040;
  border-left: 2px solid #2b2b2b;
  border-bottom-right-radius: 20px;
  overflow: hidden;
}
.tabs {
  height: 70px;
  display: flex;
}
.tab {
  width: 120px;
  display: flex;
  align-items: center;
  justify-content: center;
  background: #2b2b2b;
  border-left: 2px solid #222;
  border-bottom: 2px solid #222;
}
.tab.active {
  background: #404040;
  border: none;
}
.el-row {
  height: 80px;
  display: flex;
  align-items: center;
  gap: 14px;
  padding: 0 17px;
  border-bottom: 2px solid #363636;
  color: #bdbdbd;
}
.el-icon {
  color: #b5b5b5;
}
.el-dots,
.row-dots {
  margin-left: auto;
  display: flex;
  gap: 2px;
}
.el-dots i,
.row-dots i {
  width: 7px;
  height: 7px;
  border-radius: 50%;
  background: #bbb;
}
.selector {
  height: 178px;
  padding: 20px 14px 0 17px;
}
.sel-top {
  display: flex;
  justify-content: space-between;
  line-height: 32px;
  color: #c8c8c8;
}
.sel-top em {
  color: #f0883a;
}
.sel-input {
  height: 64px;
  margin-top: 10px;
  background: #2b2b2b;
  border: 2px solid #222;
  border-radius: 4px;
  display: flex;
  align-items: center;
  padding-left: 6px;
  gap: 8px;
}
.sel-btn {
  width: 60px;
  height: 48px;
  background: #5a5a5a;
  border-radius: 3px;
  display: flex;
  align-items: center;
  justify-content: center;
}
.sel-tag {
  width: 77px;
  height: 48px;
  background: #3b78c3;
  color: #fff;
  border-radius: 3px;
  display: flex;
  align-items: center;
  justify-content: center;
}
.sel-caret {
  margin-left: auto;
  margin-right: 22px;
  border-top: 14px solid #ddd;
  border-left: 8px solid transparent;
  border-right: 8px solid transparent;
}
.sel-note {
  margin-top: 10px;
  line-height: 26px;
  color: #a5a5a5;
}
.head {
  height: 56px;
  display: flex;
  align-items: center;
  gap: 18px;
  padding: 0 17px;
  background: #2b2b2b;
  border-top: 2px solid #222;
  border-bottom: 2px solid #222;
  font-size: 24px;
  font-weight: 600;
  color: #dcdcdc;
}
.head > i {
  border-top: 8px solid #ddd;
  border-left: 7px solid transparent;
  border-right: 7px solid transparent;
}
.head-icon {
  margin-left: auto;
}
.lab {
  width: 103px;
  flex: none;
  color: #cfcfcf;
}
.display {
  height: 81px;
  display: flex;
  align-items: center;
  padding: 0 14px 0 17px;
}
.seg {
  display: flex;
  gap: 2px;
  height: 48px;
  background: #2e2e2e;
  border: 2px solid #2e2e2e;
  border-radius: 4px;
  overflow: hidden;
}
.seg span {
  flex: 1;
  display: flex;
  align-items: center;
  justify-content: center;
  background: #4a4a4a;
}
.seg .dark-seg { background: #2b2b2b; }
.seg .lit { background: #5a5a5a; }
.seg .plain { color: #ddd; }
.flex1 { flex: 1; }
.seg4 { flex: 1; }
.seg2 { width: 112px; }
.seg-deco {
  flex: 1;
  margin-left: 16px;
}
.spacing {
  height: 274px;
  padding: 18px 14px 0 17px;
}
.sp-margin {
  position: relative;
  height: 238px;
  border-style: solid;
  border-width: 47px 71px;
  border-color: #4a4a4a #545454;
  outline: 2px solid #383838;
  outline-offset: -2px;
  background: #404040;
}
.sp-frame {
  position: relative;
  height: 100%;
  padding: 8px 9px;
  background: #383838;
  border-radius: 3px;
}
.sp-padding {
  height: 100%;
  border-style: solid;
  border-width: 48px 71px;
  border-color: #4a4a4a #545454;
  background: #404040;
}
.sp-core {
  height: 100%;
  background: #404040;
  border: 2px solid #383838;
  border-radius: 3px;
}
.sp-val {
  position: absolute;
  font-size: 22px;
  line-height: 24px;
  color: #d4d4d4;
}
.m-top { top: -37px; left: 50%; margin-left: -8px; }
.m-bottom { bottom: -36px; left: 50%; margin-left: -8px; }
.m-left { top: 50%; left: -41px; margin-top: -12px; }
.m-right { top: 50%; right: -41px; margin-top: -12px; }
.p-top { top: 17px; left: 50%; margin-left: -8px; }
.p-bottom { bottom: 20px; left: 50%; margin-left: -8px; }
.p-left { top: 50%; left: 37px; margin-top: -12px; }
.p-right { top: 50%; right: 40px; margin-top: -12px; }
.sp-name {
  position: absolute;
  font-size: 17px;
  font-style: italic;
  font-weight: 700;
  color: #999;
}
.sp-name-m { top: -42px; left: -60px; }
.sp-name-p { top: 12px; left: 20px; }
.size {
  height: 354px;
}
.size-grid {
  display: grid;
  grid-template-columns: 103px 112px 120px 112px;
  grid-auto-rows: 48px;
  row-gap: 16px;
  align-items: center;
  padding: 18px 14px 0 17px;
  height: 211px;
  border-bottom: 2px solid #363636;
}
.size-grid .lab:nth-child(4n+3) {
  padding-left: 17px;
  width: 120px;
}
.field {
  height: 48px;
  background: #2b2b2b;
  border: 2px solid #222;
  border-radius: 4px;
  display: flex;
  align-items: center;
  justify-content: space-between;
  padding: 0 8px 0 10px;
  color: #d9d9d9;
}
.field.faint {
  color: #777;
}
.field u {
  font-size: 18px;
  color: #888;
  padding-right: 0;
}
.field.faint u {
  color: #999;
  padding-right: 8px;
}
.size-more {
  padding: 14px 14px 0 17px;
  display: flex;
  flex-direction: column;
  gap: 18px;
}
.line {
  display: flex;
  align-items: center;
  height: 47px;
}
.line > .seg {
  height: 47px;
}
.select {
  flex: 1;
  height: 46px;
  background: #5a5a5a;
  border-radius: 3px;
  outline: 2px solid #383838;
  display: flex;
  align-items: center;
  justify-content: space-between;
  padding: 0 16px;
  color: #d9d9d9;
}
.select.narrow {
  flex: none;
  width: 297px;
}
.select.off {
  background: #4a4a4a;
  justify-content: flex-start;
  outline: none;
  color: #8f8f8f;
}
.x-mark {
  margin-left: 8px;
}
.off-text {
  margin-left: 24px;
  color: #6f6f6f;
}
.select.off svg:last-child {
  margin-left: auto;
}
.row-dots {
  padding-right: 8px;
}
.position {
  height: 137px;
  padding: 18px 14px 0 17px;
}
.float-btn {
  height: 42px;
  margin-top: 16px;
  background: #4c4c4c;
  border-radius: 3px;
  display: flex;
  align-items: center;
  justify-content: center;
  gap: 22px;
  color: #c8c8c8;
}
.float-btn i {
  border-left: 7px solid #ccc;
  border-top: 7px solid transparent;
  border-bottom: 7px solid transparent;
}
.typo {
  padding: 18px 14px 0 17px;
  display: flex;
  flex-direction: column;
  gap: 17px;
}
.size-pair {
  display: grid;
  grid-template-columns: 103px 112px 120px 112px;
  align-items: center;
  height: 47px;
}
.size-pair .lab:nth-child(3) {
  padding-left: 17px;
  width: 120px;
}
.set {
  background: #3c4a5c;
  color: #7db5f5;
  padding: 5px 5px;
  margin-left: -5px;
  border-radius: 3px;
}
.color-field {
  flex: 1;
  height: 47px;
  background: #2b2b2b;
  border: 2px solid #222;
  border-radius: 4px;
  display: flex;
  align-items: center;
  gap: 12px;
  color: #d9d9d9;
}
.swatch {
  width: 45px;
  height: 100%;
  background: #3a3b40 linear-gradient(135deg, transparent 82%, #fff 82%);
}
.seg-deco span:first-child {
  flex: 1.050;
}
.captions {
  display: grid;
  grid-template-columns: 215px 1fr;
  margin-left: 103px;
  margin-top: -3px;
  font-size: 20px;
  color: #c4c4c4;
  line-height: 30px;
}
.captions span {
  text-align: center;
}
```
